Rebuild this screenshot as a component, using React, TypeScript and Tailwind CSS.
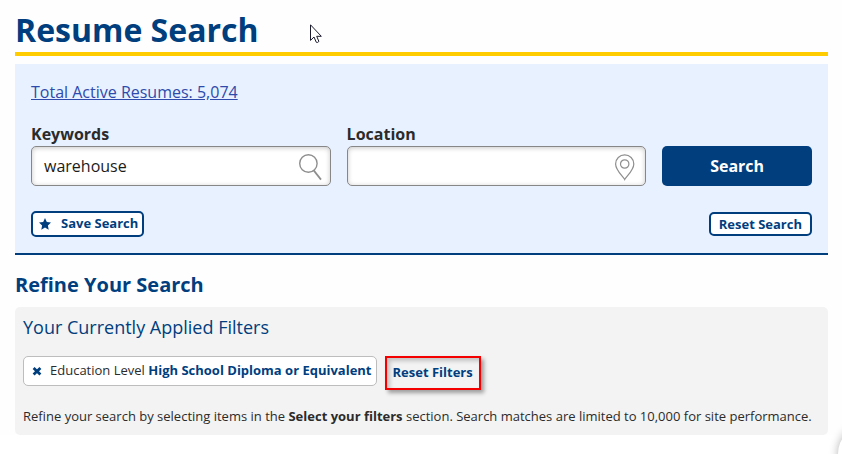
import React from 'react';

interface SearchFieldProps {
  id: string;
  label: string;
  defaultValue?: string;
  icon: React.ReactNode;
}

const MagnifierIcon: React.FC = () => (
  <svg width="24" height="28" viewBox="0 0 24 28" fill="none" stroke="#8e8e8e" strokeWidth="1.4">
    <circle cx="10.4" cy="10.5" r="8.7" />
    <path d="M15.7 17.4 L23 26.6" strokeWidth="1.7" />
  </svg>
);

const PinIcon: React.FC = () => (
  <svg width="20" height="27" viewBox="0 0 20 27" fill="none" stroke="#8e8e8e" strokeWidth="1.2">
    <path d="M9.7 25.6 C8.3 22.8 0.6 16.2 0.6 9.9 A9.1 9.1 0 0 1 18.8 9.9 C18.8 16.2 11.1 22.8 9.7 25.6 Z" />
    <circle cx="9.7" cy="10" r="4.2" />
  </svg>
);

const StarIcon: React.FC = () => (
  <svg width="12" height="12" viewBox="0 0 24 24" fill="currentColor">
    <path d="M12 0 L15.6 7.8 L24 8.9 L17.8 14.8 L19.4 23.4 L12 19.2 L4.6 23.4 L6.2 14.8 L0 8.9 L8.4 7.8 Z" />
  </svg>
);

const CrossIcon: React.FC = () => (
  <svg width="10" height="10" viewBox="0 0 10 10" stroke="currentColor" strokeWidth="2.8">
    <path d="M1.6 2 L8.4 8.4 M8.4 2 L1.6 8.4" />
  </svg>
);

const CursorIcon: React.FC = () => (
  <svg width="12" height="20" viewBox="0 0 12 20" fill="#fff" stroke="#1b1b2e" strokeWidth="1">
    <path d="M0.5 0.8 V16.4 L4 13 L6.3 18.3 Q7.6 19 8.9 17.4 L6.7 12.3 H11.3 Z" />
  </svg>
);

const SearchField: React.FC<SearchFieldProps> = ({ id, label, defaultValue, icon }) => (
  <div>
    <label htmlFor={id} className="block text-base leading-6 font-bold text-[#2b2b2b]">{label}</label>
    <div className="flex h-10 items-center rounded-[5px] border border-[#878787] bg-white pr-2 pl-3 shadow-[inset_0_1px_5px_rgba(0,0,0,0.22)]">
      <input
        id={id}
        type="text"
        defaultValue={defaultValue}
        className="min-w-0 flex-1 bg-transparent text-base text-[#1b1b1b] outline-none"
      />
      <span className="self-end pb-1">{icon}</span>
    </div>
  </div>
);

const App: React.FC = () => {
  return (
    <div className="bg-[#fefefe] pr-3.5 pl-[15px] font-['Open_Sans',sans-serif] text-[#2b2b2b]">
      <h1 className="border-b-4 border-[#ffcc00] pt-2 text-[32px] leading-[44px] font-bold text-[#003e7e]">
        Resume Search
      </h1>
      <div className="pointer-events-none absolute top-6 left-[310px]">
        <CursorIcon />
      </div>

      <form className="mt-2 border-b-2 border-[#003e7e] bg-[#e7f1ff] px-4 pt-4 pb-4" onSubmit={(e) => e.preventDefault()}>
        <a href="#resumes" className="inline-block text-base leading-6 text-[#2e4bab] underline">
          Total Active Resumes: 5,074
        </a>
        <div className="mt-[18px] grid grid-cols-[2fr_2fr_1fr] items-end gap-4">
          <SearchField id="keywords" label="Keywords" defaultValue="warehouse" icon={<MagnifierIcon />} />
          <SearchField
            id="location"
            label="Location"
            icon={<span className="block pr-0.5"><PinIcon /></span>}
          />
          <button type="submit" className="h-10 rounded-[5px] bg-[#003e7e] text-base font-bold text-white">
            Search
          </button>
        </div>
        <div className="mt-[25px] flex items-start justify-between">
          <button type="button" className="flex h-[26px] items-center gap-2.5 rounded-[5px] border-2 border-[#003e7e] bg-white pr-1 pl-1.5 text-[13px] font-bold text-[#003e7e]">
            <StarIcon />
            Save Search
          </button>
          <button type="button" className="mt-px h-6 rounded-[5px] border-2 border-[#003e7e] bg-white px-2 text-[13px] leading-5 font-bold text-[#003e7e]">
            Reset Search
          </button>
        </div>
      </form>

      <h2 className="mt-4 text-xl leading-7 font-bold text-[#003e7e]">Refine Your Search</h2>

      <section className="mt-2 rounded-[5px] bg-[#f3f3f3] px-2 pt-2 pb-[9px]">
        <h3 className="text-lg leading-6 text-[#003e7e]">Your Currently Applied Filters</h3>
        <div className="mt-[17px] flex items-start gap-2">
          <button type="button" className="flex h-[30px] items-center gap-2 rounded-[5px] border border-[#bdbdbd] bg-white pr-1 pl-2 text-[13px] text-[#003e7e]">
            <CrossIcon />
            <span><span className="text-[#2b2b2b]">Education Level</span> <b>High School Diploma or Equivalent</b></span>
          </button>
          <button type="button" className="h-[34px] border-2 border-[#f50000] px-1.5 text-[13px] font-bold text-[#003e7e] shadow-[3px_3px_4px_rgba(0,0,0,0.35),inset_3px_3px_4px_rgba(0,0,0,0.2)]">
            Reset Filters
          </button>
        </div>
        <p className="mt-4 text-[13px] leading-5">
          Refine your search by selecting items in the <b>Select your filters</b> section. Search matches are limited to 10,000 for site performance.
        </p>
      </section>

      <button type="button" aria-label="Chat" className="fixed -right-14 -bottom-[30px] size-[60px] rounded-full bg-white shadow-[0_0_10px_rgba(0,0,0,0.3)]" />
    </div>
  );
};

export default App;
